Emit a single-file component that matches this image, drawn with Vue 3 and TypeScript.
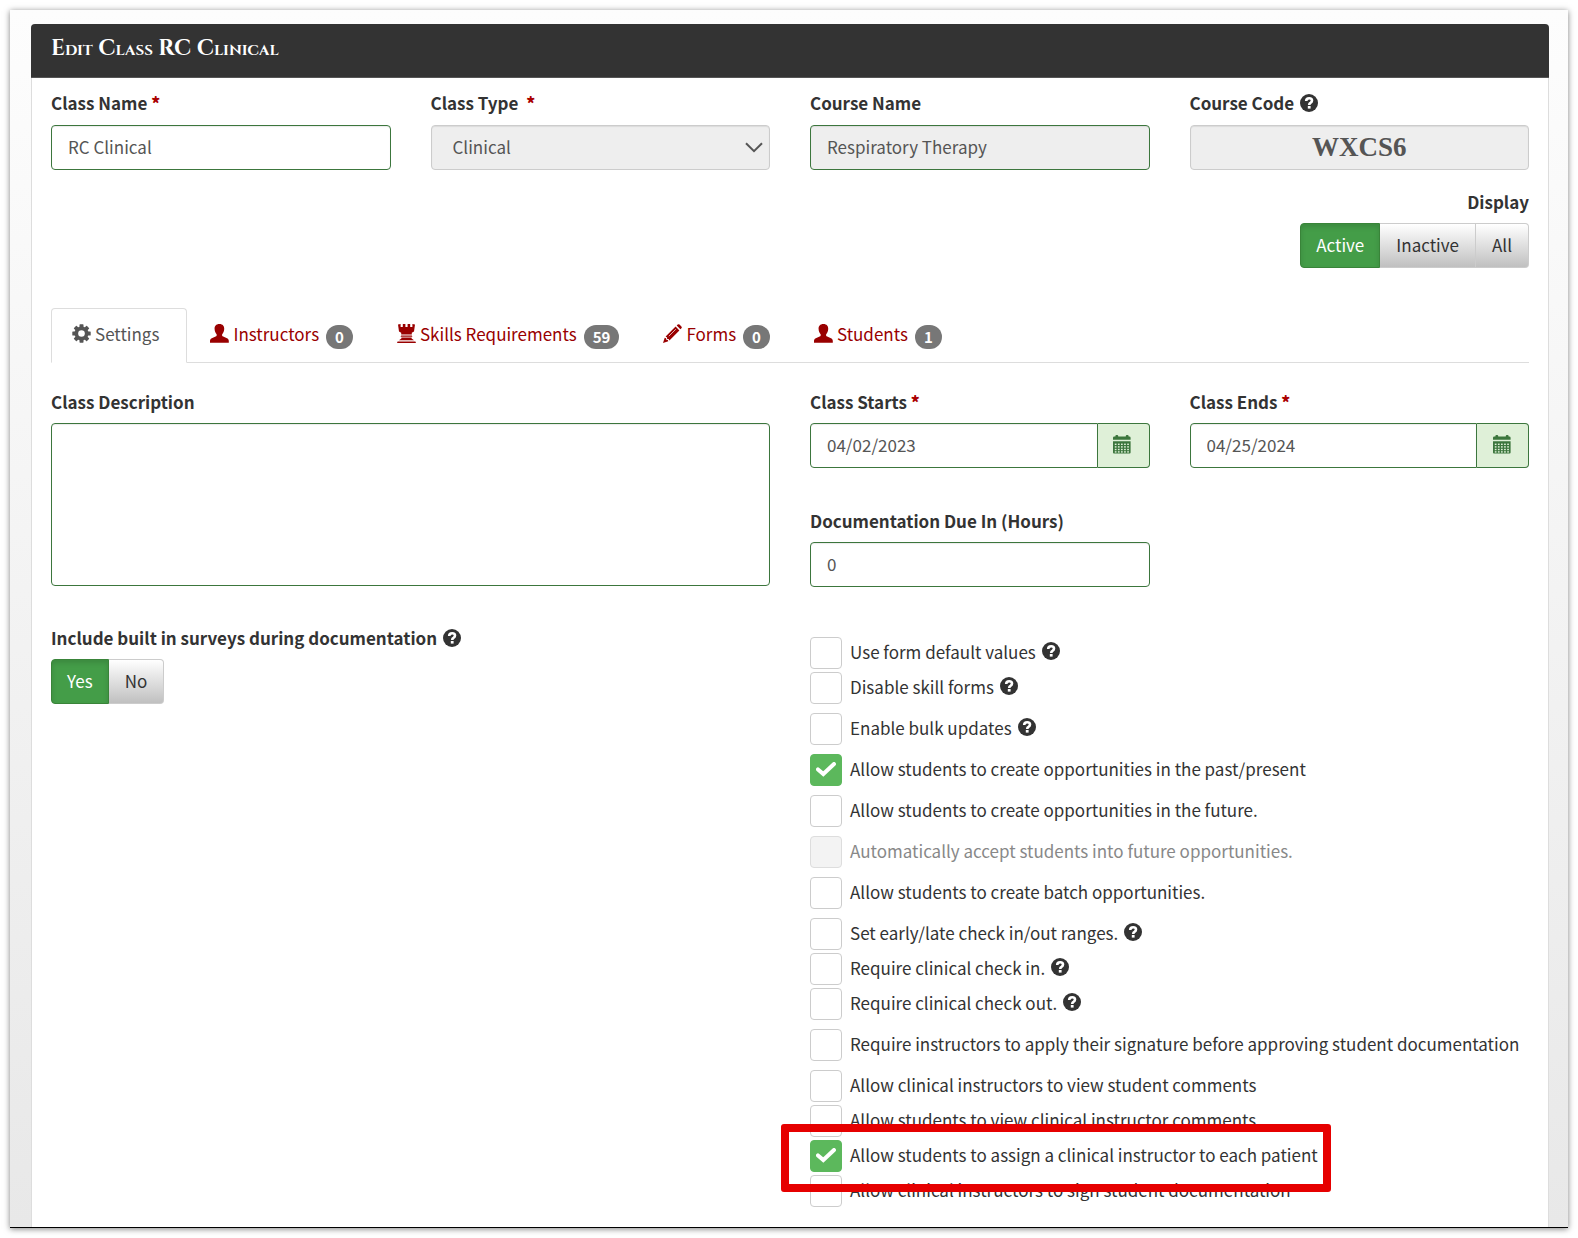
<script setup lang="ts">
import { ref, h, type FunctionalComponent } from 'vue'

const className = ref('RC Clinical')
const classType = ref('Clinical')
const courseName = ref('Respiratory Therapy')
const courseCode = ref('WXCS6')
const description = ref('')
const startDate = ref('04/02/2023')
const endDate = ref('04/25/2024')
const dueHours = ref('0')

const displayOptions = ['Active', 'Inactive', 'All']
const display = ref('Active')
const surveyOptions = ['Yes', 'No']
const surveys = ref('Yes')

interface Tab { label: string; icon: string; count?: number }
const tabs: Tab[] = [
  { label: 'Settings', icon: 'cog' },
  { label: 'Instructors', icon: 'user', count: 0 },
  { label: 'Skills Requirements', icon: 'tower', count: 59 },
  { label: 'Forms', icon: 'pencil', count: 0 },
  { label: 'Students', icon: 'user', count: 1 },
]
const activeTab = ref('Settings')

interface Option { label: string; checked?: boolean; help?: boolean; disabled?: boolean; tight?: boolean; marked?: boolean }
const options = ref<Option[]>([
  { label: 'Use form default values', help: true },
  { label: 'Disable skill forms', help: true, tight: true },
  { label: 'Enable bulk updates', help: true },
  { label: 'Allow students to create opportunities in the past/present', checked: true },
  { label: 'Allow students to create opportunities in the future.' },
  { label: 'Automatically accept students into future opportunities.', disabled: true },
  { label: 'Allow students to create batch opportunities.' },
  { label: 'Set early/late check in/out ranges.', help: true },
  { label: 'Require clinical check in.', help: true, tight: true },
  { label: 'Require clinical check out.', help: true, tight: true },
  { label: 'Require instructors to apply their signature before approving student documentation' },
  { label: 'Allow clinical instructors to view student comments' },
  { label: 'Allow students to view clinical instructor comments', tight: true },
  { label: 'Allow students to assign a clinical instructor to each patient', checked: true, tight: true, marked: true },
  { label: 'Allow clinical instructors to sign student documentation', tight: true },
])

const HelpIcon: FunctionalComponent = () =>
  h('svg', { width: 18, height: 18, viewBox: '0 0 18 18', role: 'img', 'aria-label': 'Help' }, [
    h('circle', { cx: 9, cy: 9, r: 9, fill: '#333' }),
    h('path', { d: 'M6.2 7.1Q6.2 4.3 9.2 4.3Q12 4.3 12 6.6Q12 8 10.5 8.8Q9.2 9.5 9.2 11', fill: 'none', stroke: '#fff', 'stroke-width': 2.6 }),
    h('rect', { x: 7.8, y: 12, width: 2.8, height: 2.6, fill: '#fff' }),
  ])

const CalendarIcon: FunctionalComponent = () =>
  h('svg', { width: 18, height: 19, viewBox: '0 0 18 19', 'aria-hidden': 'true' }, [
    h('path', {
      fill: '#3c763d',
      d: 'M0 4.8V2.8Q0 1.4 1.4 1.4H2.4V1Q2.4 0 3.4 0H4.2Q5.2 0 5.2 1V1.4H12.8V1Q12.8 0 13.8 0H14.6Q15.6 0 15.6 1V1.4H16.2Q17.6 1.4 17.6 2.8V4.8ZM0 6.2H17.6V17.6Q17.6 18.6 16.6 18.6H1Q0 18.6 0 17.6Z',
    }),
    ...[8.6, 11.2, 13.8, 16.2].flatMap((y) =>
      [1.8, 4.9, 8, 11.1, 14.2].map((x) => h('rect', { x, y, width: 1.7, height: 1.4, fill: '#dff0d8' })),
    ),
  ])
</script>

<template>
  <main class="frame">
    <form class="panel" @submit.prevent>
      <h1 class="panel-title">Edit Class RC Clinical</h1>
      <div class="panel-body">
        <div class="grid">
          <div class="field">
            <label for="class-name">Class Name <b class="req">*</b></label>
            <input id="class-name" v-model="className" class="control valid" type="text" />
          </div>
          <div class="field">
            <label for="class-type">Class Type &nbsp;<b class="req">*</b></label>
            <div class="select-wrap">
              <select id="class-type" v-model="classType" class="control" disabled>
                <option>Clinical</option>
              </select>
              <svg class="chevron" width="18" height="11" viewBox="0 0 18 11" aria-hidden="true">
                <path d="M1 1.2 9 9.2 17 1.2" fill="none" stroke="#555" stroke-width="2" />
              </svg>
            </div>
          </div>
          <div class="field">
            <label for="course-name">Course Name</label>
            <input id="course-name" v-model="courseName" class="control valid" type="text" readonly />
          </div>
          <div class="field">
            <label for="course-code">Course Code <HelpIcon class="help" /></label>
            <input id="course-code" v-model="courseCode" class="control code" type="text" readonly />
          </div>
        </div>

        <div class="display">
          <span class="label">Display</span>
          <div class="btn-group" role="group" aria-label="Display">
            <button v-for="o in displayOptions" :key="o" type="button" class="btn" :class="{ on: display === o }" @click="display = o">{{ o }}</button>
          </div>
        </div>

        <nav class="tabs">
          <a v-for="t in tabs" :key="t.label" href="#" class="tab" :class="{ current: activeTab === t.label, plain: t.count === undefined }" @click.prevent="activeTab = t.label">
            <svg v-if="t.icon === 'cog'" class="tab-icon" viewBox="0 0 19 19" aria-hidden="true">
              <g fill="currentColor">
                <rect v-for="a in [0, 45, 90, 135]" :key="a" x="7.5" y="0.3" width="4" height="18.4" rx="0.6" :transform="`rotate(${a} 9.5 9.5)`" />
                <circle cx="9.5" cy="9.5" r="7" />
              </g>
              <circle cx="9.5" cy="9.5" r="3.3" fill="#fff" />
            </svg>
            <svg v-else-if="t.icon === 'user'" class="tab-icon" viewBox="0 0 19 19" aria-hidden="true">
              <path fill="currentColor" d="M9.4 0C12.8 0 14.4 2.2 14.2 5C14.1 7.4 13.2 9 12.2 10.2C11.9 11.5 12.2 12.1 13.2 12.5L17 14.2C18.4 14.9 18.8 15.8 18.8 17V18.8H0V17C0 15.8.4 14.9 1.8 14.2L5.6 12.5C6.6 12.1 6.9 11.5 6.6 10.2C5.6 9 4.7 7.4 4.6 5C4.4 2.2 6 0 9.4 0Z" />
            </svg>
            <svg v-else-if="t.icon === 'tower'" class="tab-icon" viewBox="0 0 19 19" aria-hidden="true">
              <path fill="currentColor" d="M1 0.5L3.6 0V3H5.8V0H8.4V3H10.6V0H13.2V3H15.4V0L18 .5L17 7.4L14.8 8.8V10.4H4.2V8.8L2 7.4ZM4.2 11.5H14.8L15.4 12.8H3.6ZM4.4 13.6H14.6V14.6L17 16.2H2L4.4 14.6ZM.6 17.4H18.4L19 19H0Z" />
            </svg>
            <svg v-else class="tab-icon" viewBox="0 0 19 19" aria-hidden="true">
              <path fill="currentColor" d="M0 19L1.7 13.7L3 14.2L3.3 15.7L4.8 16L5.3 17.3ZM2.6 12.6L12.6 2.6L16.4 6.4L6.4 16.4L5.6 14.9L4.1 14.9L4.1 13.4ZM13.7 1.6L14.7.6Q15.6-.2 16.5.6L18.4 2.5Q19.2 3.4 18.4 4.3L17.4 5.3Z" />
              <path d="M5.8 12.2L12.8 5.2" stroke="#fff" stroke-width="0.7" />
            </svg>
            <span class="tab-text">{{ t.label }}</span>
            <span v-if="t.count !== undefined" class="badge">{{ t.count }}</span>
          </a>
        </nav>

        <div class="grid upper">
          <div class="field wide">
            <label for="description">Class Description</label>
            <textarea id="description" v-model="description" class="control valid"></textarea>
          </div>
          <div class="right">
            <div class="field">
              <label for="starts">Class Starts <b class="req">*</b></label>
              <div class="input-group">
                <input id="starts" v-model="startDate" class="control valid" type="text" />
                <button type="button" class="addon" aria-label="Choose start date"><CalendarIcon /></button>
              </div>
            </div>
            <div class="field">
              <label for="ends">Class Ends <b class="req">*</b></label>
              <div class="input-group">
                <input id="ends" v-model="endDate" class="control valid" type="text" />
                <button type="button" class="addon" aria-label="Choose end date"><CalendarIcon /></button>
              </div>
            </div>
            <div class="field">
              <label for="due">Documentation Due In (Hours)</label>
              <input id="due" v-model="dueHours" class="control valid" type="text" />
            </div>
          </div>
        </div>

        <div class="halves">
          <div class="surveys">
            <span class="label">Include built in surveys during documentation <HelpIcon class="help" /></span>
            <div class="btn-group" role="group" aria-label="Include built in surveys during documentation">
              <button v-for="o in surveyOptions" :key="o" type="button" class="btn" :class="{ on: surveys === o }" @click="surveys = o">{{ o }}</button>
            </div>
          </div>
          <div class="options">
            <label v-for="o in options" :key="o.label" class="option" :class="{ tight: o.tight, off: o.disabled, marked: o.marked }">
              <span class="box">
                <input v-model="o.checked" type="checkbox" :disabled="o.disabled" />
                <svg v-if="o.checked" width="20" height="16" viewBox="0 0 20 16" aria-hidden="true">
                  <path d="M2 7.4 7.3 12 18 2" fill="none" stroke="#fff" stroke-width="4" stroke-linecap="round" />
                </svg>
              </span>
              <span class="option-text">{{ o.label }}</span>
              <HelpIcon v-if="o.help" class="option-help" />
            </label>
          </div>
        </div>
      </div>
    </form>
  </main>
</template>

<style>
body {
  margin: 0;
  background: #fff;
}
</style>

<style scoped>
* {
  box-sizing: border-box;
}
.frame {
  margin: 10px;
  padding: 14px 19px 0 21px;
  background: linear-gradient(#fdfdfd, #e8e8e8);
  border-bottom: 1px solid #000;
  box-shadow: 0 1px 6px rgba(0, 0, 0, 0.5);
  font: 17px/24px "Noto Sans CJK SC", "Noto Sans", sans-serif;
  color: #333;
}
button, input, select, textarea {
  font: inherit;
  color: inherit;
}
.panel {
  background: #fff;
  border: 1px solid #ddd;
  border-top: 0;
  border-bottom: 0;
  border-radius: 4px 4px 0 0;
}
.panel-title {
  margin: 0 -1px;
  height: 54px;
  padding: 12px 20px;
  background: #333;
  border-bottom: 1px solid #555;
  border-radius: 4px 4px 0 0;
  color: #fff;
  font: bold 22px/26px Cinzel, "Liberation Serif", serif;
  font-variant: small-caps;
}
.panel-body {
  padding: 12px 19px 20px;
}
.grid {
  display: grid;
  grid-template-columns: repeat(4, minmax(0, 1fr));
  column-gap: 40px;
}
.field {
  display: flex;
  flex-direction: column;
}
.field > label,
.label {
  display: block;
  height: 28px;
  margin-bottom: 7px;
  line-height: 26px;
  font-weight: bold;
}
.req {
  color: #a00;
}
.help {
  margin-left: 2px;
  vertical-align: -2px;
}
.control {
  display: block;
  width: 100%;
  height: 45px;
  padding: 0 16px 2px;
  border: 1px solid #ccc;
  border-radius: 4px;
  background: #fff;
  box-shadow: inset 0 1px 1px rgba(0, 0, 0, 0.08);
  color: #555;
  outline: 0;
  opacity: 1;
}
.control.valid {
  border-color: #3c763d;
}
.control:read-only,
select.control {
  background: #eee;
}
select.control {
  appearance: none;
  padding: 0 21px 2px;
}
.select-wrap {
  position: relative;
}
.chevron {
  position: absolute;
  right: 7px;
  top: 17px;
}
.control.code {
  padding-bottom: 0;
  text-align: center;
  font: bold 27px "Liberation Serif", serif;
}
.display {
  display: flex;
  flex-direction: column;
  align-items: flex-end;
  margin-top: 19px;
}
.display .label {
  margin-bottom: 6px;
}
.btn-group {
  display: flex;
}
.btn {
  height: 45px;
  padding: 0 16px 2px;
  border: 1px solid #ccc;
  border-left-width: 0;
  background: linear-gradient(#fff, #c0c0c0);
}
.btn:first-child {
  border-radius: 4px 0 0 4px;
}
.btn:last-child {
  border-radius: 0 4px 4px 0;
}
.btn.on {
  padding: 0 15px 2px;
  border: 1px solid #398439;
  background: #449d48;
  box-shadow: inset 0 3px 5px rgba(0, 0, 0, 0.125);
  color: #fff;
}
.tabs {
  display: flex;
  gap: 2px;
  height: 55px;
  margin-top: 40px;
  border-bottom: 1px solid #ddd;
}
.tab {
  display: flex;
  align-items: center;
  height: 55px;
  padding: 0 20px 2px;
  border: 1px solid transparent;
  border-radius: 4px 4px 0 0;
  color: #900;
  text-decoration: none;
}
.tab.plain {
  padding-right: 27px;
}
.tab.current {
  border-color: #ddd #ddd #fff;
  background: #fff;
  color: #555;
}
.tab-icon {
  width: 19px;
  height: 19px;
  margin: 0 4px 2px 0;
}
.tab-text {
  padding-bottom: 1px;
}
.badge {
  height: 24px;
  margin: 4px 0 0 7px;
  padding: 0 9px;
  border-radius: 12px;
  background: #777;
  color: #fff;
  font-size: 15px;
  font-weight: bold;
}
.upper {
  margin-top: 26px;
}
.wide,
.right {
  grid-column: span 2;
}
.upper .field > label {
  margin-bottom: 6px;
}
textarea.control {
  height: 163px;
  padding: 10px 16px;
  background: #fff;
  resize: none;
}
.right {
  display: grid;
  grid-template-columns: repeat(2, minmax(0, 1fr));
  gap: 40px;
  align-content: start;
}
.input-group {
  display: flex;
}
.input-group .control {
  flex: 1;
  min-width: 0;
  border-radius: 4px 0 0 4px;
}
.addon {
  display: grid;
  place-items: center;
  width: 52px;
  height: 45px;
  padding: 0 2px 2px 0;
  border: 1px solid #3c763d;
  border-left: 0;
  border-radius: 0 4px 4px 0;
  background: #dff0d8;
}
.halves {
  display: grid;
  grid-template-columns: repeat(2, minmax(0, 1fr));
  column-gap: 40px;
  margin-top: 38px;
}
.surveys .label {
  margin-bottom: 6px;
}
.options {
  display: flex;
  flex-direction: column;
  align-items: flex-start;
  padding-top: 12px;
}
.option {
  position: relative;
  display: flex;
  height: 32px;
  margin-top: 9px;
}
.option.tight {
  margin-top: 3px;
}
.options .option:first-child {
  margin-top: 0;
}
.box {
  display: grid;
  place-items: center;
  width: 32px;
  height: 32px;
  margin-right: 8px;
}
.box > * {
  grid-area: 1 / 1;
}
.box input {
  appearance: none;
  width: 32px;
  height: 32px;
  margin: 0;
  border: 1px solid #ccc;
  border-radius: 4px;
  background: #fff;
}
.box input:checked {
  border-color: #5cb85c;
  background: #5cb85c;
}
.box input:disabled {
  border-color: #ddd;
  background: #f3f3f3;
}
.box svg {
  z-index: 1;
  pointer-events: none;
}
.option-text {
  line-height: 30px;
  white-space: nowrap;
}
.option-help {
  margin: 5px 0 0 6px;
}
.off {
  color: #888;
}
.marked::after {
  content: "";
  position: absolute;
  z-index: 2;
  inset: -16px -13px -20px -29px;
  border: 8px solid #e60000;
  border-radius: 3px;
  pointer-events: none;
}
</style>
